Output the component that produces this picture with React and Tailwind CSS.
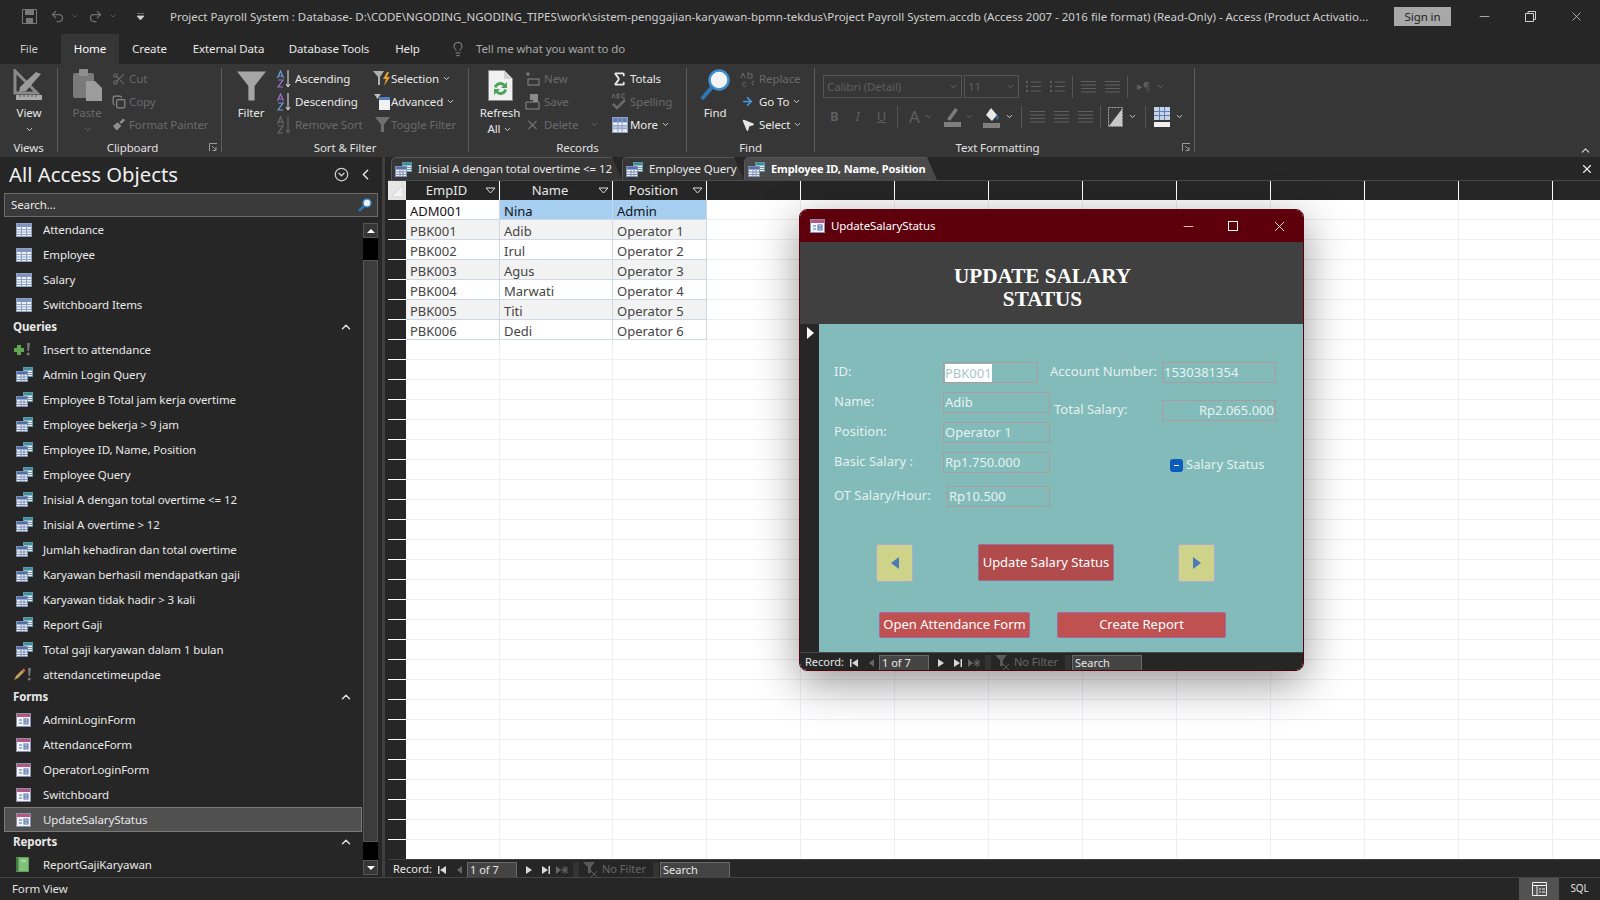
import React from 'react';
import { Scissors, Copy, Sigma, ChevronDown, ChevronUp, ChevronLeft, Lightbulb, Undo2, Redo2, Minus, X, ArrowRight, MousePointer2, CircleChevronDown } from 'lucide-react';

const SANS = "font-['Noto_Sans','Open_Sans',sans-serif]";

// ---------- small drawings ----------
const TableIcon = () => (
  <svg width="16" height="14" viewBox="0 0 16 14">
    <rect x="0.5" y="0.5" width="15" height="13" fill="#eef2f8" stroke="#8ea2c6" />
    <rect x="1" y="1" width="14" height="3" fill="#7f95c0" />
    <path d="M1 6.5h14M1 9h14M1 11.5h14M5.5 4v9M10.5 4v9" stroke="#8ea2c6" />
  </svg>
);

const QueryIcon = () => (
  <svg width="17" height="15" viewBox="0 0 17 15">
    <rect x="7.5" y="0.5" width="9" height="9" fill="#e8f0f2" stroke="#5f9aa8" />
    <rect x="8" y="1" width="8" height="2.5" fill="#3f8c9c" />
    <rect x="0.5" y="4.5" width="11" height="10" fill="#eef2f8" stroke="#7f8fb5" />
    <rect x="1" y="5" width="10" height="2.5" fill="#4f6fa8" />
    <path d="M1 10h10M1 12.5h10M5 7.5v7M8 7.5v7M12 5.5h4M12 7.5h4" stroke="#7f8fb5" />
  </svg>
);

const FormIcon = () => (
  <svg width="15" height="14" viewBox="0 0 15 14">
    <rect x="0.5" y="0.5" width="14" height="13" fill="#f3f5fa" stroke="#8a8fb0" />
    <rect x="1" y="1" width="13" height="3" fill="#b5567e" />
    <path d="M3 7h3M3 10h3" stroke="#4f6fa8" />
    <rect x="8" y="6" width="4" height="2" fill="none" stroke="#4f6fa8" />
    <rect x="8" y="9" width="4" height="2" fill="none" stroke="#4f6fa8" />
  </svg>
);

const ReportIcon = () => (
  <svg width="13" height="15" viewBox="0 0 13 15">
    <rect x="0" y="0" width="13" height="15" rx="1" fill="#5f9f5c" />
    <rect x="3" y="1" width="9" height="13" fill="#7fc07a" />
    <path d="M5 4h5" stroke="#d8f0d6" />
    <path d="M0 1h2v13H0z" fill="#3f7a40" />
  </svg>
);

const InsertQueryIcon = () => (
  <svg className="-ml-[3px]" width="20" height="15" viewBox="0 0 20 15">
    <path d="M4 3h4v3h3v4H8v3H4v-3H1V6h3z" fill="#5fa552" />
    <path d="M14 1h3l-1 8h-1.5z" fill="#777" />
    <circle cx="15.2" cy="12" r="1.5" fill="#777" />
  </svg>
);

const UpdateQueryIcon = () => (
  <svg className="-ml-[3px]" width="20" height="15" viewBox="0 0 20 15">
    <path d="M1 13l2-4 6-6 2 2-6 6z" fill="#c9a05a" />
    <path d="M9 3l1.5-1.5 2 2L11 5z" fill="#d06a5a" />
    <path d="M15 1h3l-1 8h-1.5z" fill="#777" />
    <circle cx="16.2" cy="12" r="1.5" fill="#777" />
  </svg>
);

const FunnelIcon = ({ w = 14, h = 14, fill = '#a5a5a5' }) => (
  <svg width={w} height={h} viewBox="0 0 28 28">
    <path d="M0 0h28L17 14v14h-6V14z" fill={fill} />
  </svg>
);

const TriDown = ({ color = '#e0e0e0' }) => (
  <svg width="11" height="7" viewBox="0 0 11 7">
    <path d="M1 1h9L5.5 6z" fill="none" stroke={color} />
  </svg>
);

const Launcher = () => (
  <svg width="9" height="9" viewBox="0 0 9 9" className="text-[#9a9a9a]">
    <path d="M0.5 8V0.5H8M3 3l4 4M7 4v3.5H3.5" fill="none" stroke="currentColor" />
  </svg>
);

// A/Z stacked, drawn with the arrow beside them
const SortIcon = ({ top, bottom, stroke }) => (
  <svg width="15" height="18" viewBox="0 0 15 18">
    <path d="M0.5 8L3.5 1l3 7M1.500 6h4" fill="none" stroke={top} strokeWidth="1.2" />
    <path d="M1 10h5l-5 7h5" fill="none" stroke={bottom} strokeWidth="1.2" />
    <path d="M11 0v16M9 14l2 3 2-3" fill="none" stroke={stroke} />
  </svg>
);

const GridIcon = ({ size = 15 }) => (
  <svg width={size} height={size} viewBox="0 0 15 15">
    <rect x="0.5" y="0.5" width="14" height="14" fill="#eef2f8" stroke="#8ea2c6" />
    <rect x="1" y="1" width="13" height="4" fill="#5f7fb5" />
    <rect x="1" y="8" width="13" height="3" fill="#b8c6de" />
    <path d="M1 8h13M1 11h13M5.5 1v13M9.5 1v13" stroke="#8ea2c6" />
  </svg>
);

const Lines = ({ dots }) => (
  <svg width="15" height="13" viewBox="0 0 15 13" className="shrink-0">
    {dots && <path d="M0 2h2M0 6.5h2M0 11h2" stroke="#5f5f5f" strokeWidth="2" />}
    <path d={dots ? 'M5 2h10M5 6.5h10M5 11h10' : 'M0 1.5h15M0 5h15M0 8.5h15M0 12h15'} stroke="#5f5f5f" />
  </svg>
);

// ---------- ribbon ----------
const Chev = ({ dim }) => <ChevronDown size={9} strokeWidth={2.5} className={`shrink-0 ${dim ? 'text-[#6a6a6a]' : 'text-[#d8d8d8]'}`} />;

function Small({ icon, label, dim, chev, iconW = 'w-[17px]', gap = 'ml-[3px]' }) {
  return (
    <div className={`flex h-[23px] items-center whitespace-nowrap ${dim ? 'text-[#6a6a6a]' : 'text-[#e8e8e8]'}`}>
      <span className={`flex items-center justify-center shrink-0 ${iconW}`}>{icon}</span>
      <span className={gap}>{label}</span>
      {chev && <span className="ml-[3px]"><Chev dim={dim} /></span>}
    </div>
  );
}

function Big({ icon, label, second, chev, dim, w }) {
  return (
    <div className={`flex flex-col items-center shrink-0 ${w} ${dim ? 'text-[#6a6a6a]' : 'text-[#e8e8e8]'}`}>
      <div className="h-[33px] flex items-end justify-center">{icon}</div>
      <div className="mt-[4px] leading-[16px]">{label}</div>
      <div className="h-[16px] flex items-center gap-[3px] leading-[16px]">
        {second && <span>{second}</span>}
        {chev && <Chev dim={dim} />}
      </div>
    </div>
  );
}

function Group({ title, w, launcher, children }) {
  return (
    <div className={`relative flex flex-col shrink-0 border-r border-[#5c5c5c] mt-[4px] mb-[5px] ${w}`}>
      <div className="flex flex-1 min-h-0">{children}</div>
      <div className={`h-[8px] flex items-center justify-center text-[#e0e0e0] ${launcher ? 'pr-[14px]' : ''}`}>{title}</div>
      {launcher && <div className="absolute right-[3px] bottom-[0px]"><Launcher /></div>}
    </div>
  );
}

function Ribbon() {
  return (
    <div className="flex h-[93px] bg-[#363636]">
      <Group title="Views" w="w-[58px]">
        <Big w="w-[58px]" label="View" chev icon={
          <svg width="32" height="32" viewBox="0 0 32 32">
            <path d="M2 2v22h22z" fill="none" stroke="#8a8a8a" strokeWidth="3" />
            <path d="M7 18l16-15 5 2-15 17-7 1z" fill="#9a9a9a" />
            <rect x="3" y="26" width="26" height="5" fill="#a8a8a8" />
            <path d="M7 26v2M11 26v2M15 26v2M19 26v2M23 26v2" stroke="#555" />
          </svg>
        } />
      </Group>

      <Group title="Clipboard" w="w-[164px]" launcher>
        <Big dim w="w-[58px]" label="Paste" chev icon={
          <svg width="29" height="32" viewBox="0 0 29 32">
            <rect x="0" y="4" width="21" height="25" rx="2" fill="#7a7a7a" />
            <rect x="6" y="0" width="9" height="7" rx="1" fill="#8f8f8f" />
            <path d="M13 12h9l7 7v13H13z" fill="#9c9c9c" />
          </svg>
        } />
        <div className="-ml-[4px] -mt-[1px]">
          <Small dim icon={<Scissors size={14} />} label="Cut" iconW="w-[14px]" />
          <Small dim icon={<Copy size={14} className="text-[#8a8a8a]" />} label="Copy" iconW="w-[14px]" />
          <Small dim icon={<svg width="15" height="15" viewBox="0 0 15 15"><path d="M1 9l5-4 4 4-5 5z" fill="#8f8f8f" /><path d="M8 5l4-4 2 2-4 4z" fill="#8f8f8f" /></svg>} label="Format Painter" iconW="w-[14px]" />
        </div>
      </Group>

      <Group title="Sort & Filter" w="w-[247px]">
        <Big w="w-[58px]" label="Filter" icon={<FunnelIcon w={29} h={30} />} />
        <div className="-ml-[3px] -mt-[1px] w-[96px] shrink-0">
          <Small icon={<SortIcon top="#6f9fe0" bottom="#a070d0" stroke="#e8e8e8" />} label="Ascending" iconW="w-[15px]" />
          <Small icon={<SortIcon top="#a070d0" bottom="#6f9fe0" stroke="#e8e8e8" />} label="Descending" iconW="w-[15px]" />
          <Small dim icon={<SortIcon top="#6a6a6a" bottom="#6a6a6a" stroke="#6a6a6a" />} label="Remove Sort" iconW="w-[15px]" />
        </div>
        <div className="-mt-[1px]">
          <Small chev iconW="w-[18px]" gap="ml-0" label="Selection" icon={
            <svg width="18" height="16" viewBox="0 0 18 16"><path d="M0 0h11L7 6v8H5V6z" fill="#b0b0b0" /><path d="M14 1l-4 7h3l-2 7 6-9h-3l2-5z" fill="#e0a030" /></svg>
          } />
          <Small chev iconW="w-[18px]" gap="ml-0" label="Advanced" icon={
            <svg width="18" height="16" viewBox="0 0 18 16"><path d="M1 0h7L5 4v1H4V4z" fill="#c0c0c0" /><rect x="6" y="3" width="11" height="13" fill="#f0f0f0" /><rect x="6" y="3" width="11" height="3" fill="#4f7fc0" /></svg>
          } />
          <Small dim iconW="w-[18px]" gap="ml-0" label="Toggle Filter" icon={<FunnelIcon w={15} h={15} fill="#6e6e6e" />} />
        </div>
      </Group>

      <Group title="Records" w="w-[218px]">
        <Big w="w-[62px]" label="Refresh" second="All" chev icon={
          <svg width="25" height="31" viewBox="0 0 25 31">
            <path d="M0.5 0.5h16l8 8v22h-24z" fill="#f0f0f0" stroke="#8a8a8a" />
            <path d="M16 1v8h8" fill="#d0d0d0" />
            <path d="M6 17a6.5 6.5 0 0 1 11-3l2-2v6h-6l2-2a4 4 0 0 0-6.5 2zM19 20a6.5 6.5 0 0 1-11 3l-2 2v-6h6l-2 2a4 4 0 0 0 6.5-2z" fill="#4ba35c" />
          </svg>
        } />
        <div className="-ml-[6px] -mt-[1px] w-[86px] shrink-0">
          <Small dim icon={<svg width="15" height="15" viewBox="0 0 15 15"><path d="M3 1v4M1 3h4" stroke="#8a8a8a" /><rect x="3" y="8" width="11" height="6" fill="none" stroke="#8a8a8a" /></svg>} label="New" iconW="w-[15px]" gap="ml-[4px]" />
          <Small dim icon={<svg width="15" height="17" viewBox="0 0 15 17"><path d="M1 9h13v7H1z" fill="none" stroke="#8a8a8a" /><path d="M5 1h8v8H8v-2H5z" fill="#8a8a8a" /></svg>} label="Save" iconW="w-[15px]" gap="ml-[4px]" />
          <div className="flex items-center">
            <Small dim icon={<X size={18} className="text-[#6e6e6e]" />} label="Delete" iconW="w-[15px]" gap="ml-[4px]" />
            <span className="ml-[12px]"><Chev dim /></span>
          </div>
        </div>
        <div className="-mt-[1px]">
          <Small icon={<Sigma size={18} strokeWidth={2.5} className="text-[#e8e8e8]" />} label="Totals" iconW="w-[17px]" gap="ml-[2px]" />
          <Small dim icon={<svg width="17" height="17" viewBox="0 0 17 17"><path d="M2 11l4 4 8-8" fill="none" stroke="#6a6a6a" strokeWidth="2.5" /><path d="M1 5l1.500-4 1.500 4M6 1v4h2V1zM14 1h-3v4h3" fill="none" stroke="#6a6a6a" /></svg>} label="Spelling" iconW="w-[17px]" gap="ml-[2px]" />
          <Small chev icon={<GridIcon size={16} />} label="More" iconW="w-[17px]" gap="ml-[2px]" />
        </div>
      </Group>

      <Group title="Find" w="w-[128px]">
        <Big w="w-[56px]" label="Find" icon={
          <svg width="30" height="32" viewBox="0 0 30 32">
            <circle cx="19" cy="11" r="9.5" fill="#f4f4f4" stroke="#3f8fd0" strokeWidth="2.5" />
            <path d="M12 18L2 30" stroke="#2f75b5" strokeWidth="4" />
          </svg>
        } />
        <div className="-ml-[4px] -mt-[1px]">
          <Small dim icon={<svg width="15" height="16" viewBox="0 0 15 16"><path d="M1 7l2-5 2 5M8 1v6h4V3H8M6 12a2 2 0 1 0 0 3M14 10a2 2 0 1 0 0 4" fill="none" stroke="#6a6a6a" /></svg>} label="Replace" iconW="w-[17px]" />
          <Small chev icon={<ArrowRight size={13} strokeWidth={3} className="text-[#4a9be0]" />} label="Go To" iconW="w-[17px]" />
          <Small chev icon={<MousePointer2 size={14} fill="#e8e8e8" className="text-[#e8e8e8]" />} label="Select" iconW="w-[17px]" />
        </div>
      </Group>

      <Group title="Text Formatting" w="w-[380px]" launcher>
        <div className="pl-[8px] pt-[7px] text-[#5f5f5f]">
          <div className="flex h-[23px] items-center gap-[2px]">
            <div className="flex w-[139px] h-[23px] items-center justify-between border border-[#555] px-[3px]">Calibri (Detail)<Chev dim /></div>
            <div className="flex w-[55px] h-[23px] items-center justify-between border border-[#555] px-[3px]">11<Chev dim /></div>
            <div className="flex items-center gap-[9px] ml-[5px] pr-[7px] border-r border-[#555] h-[22px]"><Lines dots /><Lines dots /></div>
            <div className="flex items-center gap-[9px] ml-[6px] pr-[7px] border-r border-[#555] h-[22px]"><Lines /><Lines /></div>
            <div className="flex items-center gap-[6px] ml-[7px]"><span className="text-[11px]">▸¶</span><Chev dim /></div>
          </div>
          <div className="flex h-[23px] mt-[7px] items-center">
            <div className="flex w-[75px] items-center gap-[17px] pl-[7px] font-bold text-[13px] border-r border-[#555] h-[22px]"><span>B</span><span className="italic font-normal">I</span><span className="underline font-normal">U</span></div>
            <div className="flex items-center gap-[4px] ml-[11px] text-[17px]">A<Chev dim /></div>
            <div className="ml-[11px] flex items-center gap-[4px]">
              <svg width="17" height="20" viewBox="0 0 17 20"><path d="M3 12l8-11 3 2-8 11z" fill="#7a7a7a" /><rect y="15" width="17" height="5" fill="#7f7f7f" /></svg>
              <Chev dim />
            </div>
            <div className="ml-[9px] flex items-center gap-[5px]">
              <svg width="17" height="22" viewBox="0 0 17 22"><path d="M8 2l6 7-5 6-6-6z" fill="#e8e8e8" /><path d="M14 8c2 3 2 5 0 6-1-1-1-3 0-6z" fill="#2f75b5" /><rect y="17" width="17" height="5" fill="#7f7f7f" /></svg>
              <Chev />
            </div>
            <div className="flex items-center gap-[9px] ml-[7px] pr-[7px] border-x border-[#555] pl-[8px] h-[22px]"><Lines /><Lines /><Lines /></div>
            <div className="flex items-center gap-[5px] ml-[7px] pr-[8px] border-r border-[#555] h-[22px]">
              <svg width="15" height="20" viewBox="0 0 15 20"><rect x="0.5" y="0.5" width="14" height="19" fill="#3a3a3a" stroke="#a8a8a8" strokeDasharray="2 1" /><path d="M1 19L14 2v17z" fill="#c8c8c8" /></svg>
              <Chev />
            </div>
            <div className="flex items-center gap-[5px] ml-[8px]">
              <svg width="16" height="20" viewBox="0 0 16 20"><rect width="16" height="13" fill="#c8d3e6" /><path d="M0 4.5h16M0 8.5h16M5.5 0v13M10.5 0v13" stroke="#5f7fb5" /><rect y="15" width="16" height="5" fill="#f0f0f0" /></svg>
              <Chev />
            </div>
          </div>
        </div>
      </Group>

      <div className="flex-1 relative">
        <ChevronUp size={13} className="absolute right-[8px] bottom-[0px] text-[#d8d8d8]" />
      </div>
    </div>
  );
}

// ---------- navigation pane ----------
const NAV = [
  { name: 'Tables', hidden: true, items: [['Attendance', TableIcon], ['Employee', TableIcon], ['Salary', TableIcon], ['Switchboard Items', TableIcon]] },
  { name: 'Queries', items: [
    ['Insert to attendance', InsertQueryIcon], ['Admin Login Query', QueryIcon], ['Employee B Total jam kerja overtime', QueryIcon],
    ['Employee bekerja > 9 jam', QueryIcon], ['Employee ID, Name, Position', QueryIcon], ['Employee Query', QueryIcon],
    ['Inisial A dengan total overtime <= 12', QueryIcon], ['Inisial A overtime > 12', QueryIcon], ['Jumlah kehadiran dan total overtime', QueryIcon],
    ['Karyawan berhasil mendapatkan gaji', QueryIcon], ['Karyawan tidak hadir > 3 kali', QueryIcon], ['Report Gaji', QueryIcon],
    ['Total gaji karyawan dalam 1 bulan', QueryIcon], ['attendancetimeupdae', UpdateQueryIcon],
  ] },
  { name: 'Forms', items: [['AdminLoginForm', FormIcon], ['AttendanceForm', FormIcon], ['OperatorLoginForm', FormIcon], ['Switchboard', FormIcon], ['UpdateSalaryStatus', FormIcon]] },
  { name: 'Reports', items: [['ReportGajiKaryawan', ReportIcon]] },
];

function NavPane() {
  return (
    <div className="flex flex-col w-[379px] shrink-0 bg-[#262626] text-[#e8e8e8]">
      <div className="flex h-[36px] items-center pb-[2px] pl-[9px] pr-[5px]">
        <span className="text-[20.3px] tracking-normal flex-1 leading-[28px] text-[#f0f0f0]">All Access Objects</span>
        <CircleChevronDown size={15} className="text-[#d0d0d0] mr-[8px]" />
        <ChevronLeft size={17} className="text-[#e8e8e8]" />
      </div>
      <div className="flex h-[24px] mx-[4px] mr-[1px] items-center justify-between border border-[#6a6a6a] bg-[#3a3a3a] pl-[6px] pr-[5px]">
        <span>Search...</span>
        <svg width="14" height="14" viewBox="0 0 14 14">
          <circle cx="9" cy="5" r="4" fill="#f0f0f0" stroke="#2f85d0" strokeWidth="1.5" />
          <path d="M6 8l-5 5" stroke="#2f75b5" strokeWidth="2.5" />
        </svg>
      </div>
      <div className="flex flex-1 min-h-0 pr-[1px]">
        <div className="flex-1 min-w-0 overflow-hidden pl-[4px]">
          {NAV.map(g => (
            <div key={g.name}>
              {!g.hidden && (
                <div className="flex h-[20px] items-center justify-between pl-[9px] pr-[9px] font-bold">
                  {g.name}
                  <ChevronUp size={14} strokeWidth={2.5} className="text-[#e0e0e0]" />
                </div>
              )}
              {g.items.map(([label, Icon]) => (
                <div key={label} className={`flex h-[25px] items-center border ${label === 'UpdateSalaryStatus' ? 'bg-[#505050] border-[#7a7a7a]' : 'border-transparent'}`}>
                  <span className="flex w-[38px] pl-[11px] shrink-0 items-center"><Icon /></span>
                  <span className="whitespace-nowrap">{label}</span>
                </div>
              ))}
            </div>
          ))}
        </div>
        <div className="flex flex-col w-[15px] mt-[6px] mb-[2px] ml-[1px] shrink-0">
          <div className="flex h-[15px] items-center justify-center bg-[#363636] border border-[#555]"><span className="block w-0 h-0 border-x-[4px] border-x-transparent border-b-[4px] border-b-white" /></div>
          <div className="h-[22px] bg-black" />
          <div className="flex-1 bg-[#3c3c3c] border border-[#555]" />
          <div className="h-[18px] bg-black" />
          <div className="flex h-[15px] items-center justify-center bg-[#363636] border border-[#555]"><span className="block w-0 h-0 border-x-[4px] border-x-transparent border-t-[4px] border-t-white" /></div>
        </div>
      </div>
    </div>
  );
}

// ---------- datasheet ----------
const ROWS = [
  ['ADM001', 'Nina', 'Admin'], ['PBK001', 'Adib', 'Operator 1'], ['PBK002', 'Irul', 'Operator 2'], ['PBK003', 'Agus', 'Operator 3'],
  ['PBK004', 'Marwati', 'Operator 4'], ['PBK005', 'Titi', 'Operator 5'], ['PBK006', 'Dedi', 'Operator 6'],
];
const EMPTY_COLS = Array.from({ length: 10 });
const EMPTY_ROWS = Array.from({ length: 26 });

function Tab({ label, w, active }) {
  return (
    <div className={`flex h-[23px] items-center shrink-0 pl-[3px] rounded-tl-[5px] border-t border-l border-[#555] [clip-path:polygon(0_0,calc(100%-10px)_0,100%_100%,0_100%)] ${active ? 'bg-[#4a4a4a] font-bold text-[11px] text-white' : 'bg-[#363636] text-[#e8e8e8]'} ${w}`}>
      <QueryIcon />
      <span className="ml-[6px] whitespace-nowrap">{label}</span>
    </div>
  );
}

function RecordBar() {
  return (
    <div className="flex items-center h-[17px] pt-[2px] text-[11px] tracking-normal bg-[#262626] text-[#e8e8e8] whitespace-nowrap">
      <span className="ml-[5px] w-[45px]">Record:</span>
      <svg width="8" height="8" viewBox="0 0 8 8"><path d="M0 0h1.5v8H0zM8 0v8L2 4z" fill="#d8d8d8" /></svg>
      <svg className="ml-[11px]" width="6" height="8" viewBox="0 0 6 8"><path d="M5 0v8L0 4z" fill="#666" /></svg>
      <div className="ml-[4px] flex items-center w-[50px] h-[15px] bg-[#444] border-t border-x border-[#6a6a6a] pl-[2px]">1 of 7</div>
      <svg className="ml-[9px]" width="6" height="8" viewBox="0 0 6 8"><path d="M0 0v8l6-4z" fill="#d8d8d8" /></svg>
      <svg className="ml-[10px]" width="8" height="8" viewBox="0 0 8 8"><path d="M0 0v8l6-4zM6.500 0H8v8H6.500z" fill="#d8d8d8" /></svg>
      <svg className="ml-[6px]" width="12" height="8" viewBox="0 0 12 8"><path d="M0 0v8l5-4z" fill="#666" /><path d="M9 0v8M5 4h7M6 1l6 6M12 1l-6 6" stroke="#666" /></svg>
      <div className="ml-[5px] h-[15px] w-[6px] bg-[#333]" />
      <svg className="ml-[4px]" width="16" height="15" viewBox="0 0 16 15"><path d="M0 0h12L8 5v6H5V5z" fill="#5a5a5a" /><path d="M8 9l6 6M14 9l-6 6" stroke="#5a5a5a" /></svg>
      <span className="ml-[3px] w-[47px] text-[#666]">No Filter</span>
      <div className="ml-[4px] h-[15px] w-[6px] bg-[#333]" />
      <div className="ml-[1px] flex items-center w-[70px] h-[15px] bg-[#444] border-t border-x border-[#6a6a6a] pl-[2px]">Search</div>
    </div>
  );
}

const colW = j => (j === 1 ? 'w-[113px]' : 'w-[94px]');

function Datasheet() {
  return (
    <div className="flex flex-col flex-1 min-w-0 bg-[#262626]">
      <div className="flex h-[24px] shrink-0 items-end pl-[3px] border-b border-[#4a4a4a]">
        <Tab label="Inisial A dengan total overtime <= 12" w="w-[231px]" />
        <Tab label="Employee Query" w="w-[122px]" />
        <Tab label="Employee ID, Name, Position" w="w-[193px]" active />
        <div className="flex-1" />
        <X size={14} className="text-[#e8e8e8] mr-[6px] mb-[4px]" />
      </div>
      <div className="flex flex-1 min-h-0 text-[13px] tracking-normal overflow-hidden">
        <div className="flex flex-col w-[18px] shrink-0">
          <svg className="shrink-0" width="18" height="19" viewBox="0 0 18 19">
            <rect width="18" height="19" fill="#e6e6e6" />
            <path d="M3 16L15 4v12z" fill="#f2f2f2" stroke="#d4d4d4" />
          </svg>
          {[...ROWS, ...EMPTY_ROWS].map((_, i) => <div key={i} className="h-[20px] shrink-0 bg-[#262626] border-b border-white" />)}
        </div>
        <div className="flex-1 min-w-0 bg-white overflow-hidden">
          <div className="flex h-[19px] bg-[#262626] text-[#e8e8e8]">
            {['EmpID', 'Name', 'Position'].map((h, j) => (
              <div key={h} className={`relative flex items-center justify-center shrink-0 pr-[12px] border-r border-white ${colW(j)}`}>
                {h}
                <span className="absolute right-[3px] top-[6px]"><TriDown /></span>
              </div>
            ))}
            {EMPTY_COLS.map((_, i) => <div key={i} className="w-[94px] shrink-0 border-r border-white" />)}
          </div>
          {ROWS.map((r, i) => (
            <div key={r[0]} className={`flex h-[20px] ${i === 0 ? 'text-[#111]' : 'text-[#444]'} ${i % 2 === 1 ? 'bg-[#f2f2f2]' : 'bg-white'}`}>
              {r.map((c, j) => (
                <div key={j} className={`h-[20px] shrink-0 pl-[4px] pt-[3px] leading-[17px] border-r border-b border-[#d0d7e5] ${colW(j)} ${i === 0 && j > 0 ? 'bg-[#a6cef0]' : ''}`}>{c}</div>
              ))}
              {EMPTY_COLS.map((_, k) => <div key={k} className="w-[94px] shrink-0 h-[20px] bg-white border-r border-b border-[#eeeff4]" />)}
            </div>
          ))}
          {EMPTY_ROWS.map((_, i) => (
            <div key={i} className="flex h-[20px]">
              {[0, 1, 2].map(j => <div key={j} className={`shrink-0 border-r border-b border-[#eeeff4] ${colW(j)}`} />)}
              {EMPTY_COLS.map((_, k) => <div key={k} className="w-[94px] shrink-0 border-r border-b border-[#eeeff4]" />)}
            </div>
          ))}
        </div>
      </div>
      <div className="border-t border-[#3f3f3f]"><RecordBar /></div>
    </div>
  );
}

// ---------- floating form ----------
const Label = ({ children, w }) => <span className={`shrink-0 whitespace-nowrap -translate-y-[1px] ${w}`}>{children}</span>;
const Field = ({ w, right, children }) => (
  <div className={`flex items-center h-[21px] border border-[#a89c9c] text-[#e6f3f1] px-[1px] ${w} ${right ? 'justify-end' : ''}`}>{children}</div>
);

function FormWindow() {
  return (
    <div className="absolute left-[799px] top-[209px] flex flex-col w-[505px] h-[462px] rounded-[8px] overflow-hidden border border-[#5e000c] shadow-[0_12px_44px_rgba(0,0,0,0.42)] text-[13px] tracking-normal">
      <div className="flex h-[32px] shrink-0 items-center bg-[#5e000c] text-[11.5px] tracking-[-0.1px] text-white">
        <span className="ml-[10px]"><FormIcon /></span>
        <span className="ml-[6px] flex-1">UpdateSalaryStatus</span>
        <Minus size={15} strokeWidth={1.2} className="mr-[32px]" />
        <div className="w-[10px] h-[10px] border border-white mr-[33px]" />
        <X size={17} strokeWidth={1.2} className="mr-[15px]" />
      </div>
      <div className="flex h-[82px] shrink-0 items-center justify-center bg-[#404040] pr-[18px] pt-[10px] text-center font-['Liberation_Serif',serif] font-bold text-[21.2px] leading-[23.5px] text-white">
        UPDATE SALARY<br />STATUS
      </div>
      <div className="flex flex-1 min-h-0">
        <div className="w-[19px] shrink-0 bg-[#262626] pt-[3px] pl-[7px]">
          <span className="block w-0 h-0 border-y-[6px] border-y-transparent border-l-[7px] border-l-white" />
        </div>
        <div className="flex-1 bg-[#82bbb9] text-[#e4f1ef] pl-[15px] pt-[38px]">
          <div className="flex h-[145px]">
            <div className="w-[216px] shrink-0 flex flex-col">
              <div className="flex items-center h-[21px]">
                <Label w="w-[109px]">ID:</Label>
                <Field w="w-[95px]"><span className="bg-white text-[#a8c8c8] leading-[18px]">PBK001</span></Field>
              </div>
              <div className="flex items-center h-[21px] mt-[9px]"><Label w="w-[109px]">Name:</Label><Field w="w-[107px]">Adib</Field></div>
              <div className="flex items-center h-[21px] mt-[9px]"><Label w="w-[109px]">Position:</Label><Field w="w-[107px]">Operator 1</Field></div>
              <div className="flex items-center h-[21px] mt-[9px]"><Label w="w-[109px]">Basic Salary :</Label><Field w="w-[107px]">Rp1.750.000</Field></div>
              <div className="flex items-center h-[21px] mt-[13px]"><Label w="w-[113px]">OT Salary/Hour:</Label><Field w="w-[103px]">Rp10.500</Field></div>
            </div>
            <div className="flex flex-col">
              <div className="flex items-center h-[21px]"><Label w="w-[112px]">Account Number:</Label><Field w="w-[114px]">1530381354</Field></div>
              <div className="flex items-center h-[21px] mt-[17px] pl-[4px]"><Label w="w-[108px]">Total Salary:</Label><Field w="w-[114px]" right>Rp2.065.000</Field></div>
              <div className="flex items-center h-[16px] mt-[36px] pl-[120px] whitespace-nowrap">
                <span className="flex items-center justify-center w-[13px] h-[13px] rounded-[3px] bg-[#0a5dba] mr-[3px]"><span className="block w-[5px] h-[1px] bg-white" /></span>
                Salary Status
              </div>
            </div>
          </div>
          <div className="flex mt-[37px] pl-[42px] items-start">
            <div className="flex items-center justify-center w-[37px] h-[38px] rounded-[2px] bg-[#cfd38a] border border-[#a9add8]"><span className="block w-0 h-0 border-y-[6px] border-y-transparent border-r-[8px] border-r-[#4a7db5]" /></div>
            <div className="flex items-center justify-center ml-[65px] w-[136px] h-[37px] rounded-[2px] bg-[#b14b4b] text-white border border-[#a06a9a]">Update Salary Status</div>
            <div className="flex items-center justify-center ml-[64px] w-[37px] h-[38px] rounded-[2px] bg-[#cfd38a] border border-[#a9add8]"><span className="block w-0 h-0 border-y-[6px] border-y-transparent border-l-[8px] border-l-[#4a7db5]" /></div>
          </div>
          <div className="flex mt-[30px] pl-[45px]">
            <div className="flex items-center justify-center w-[151px] h-[26px] rounded-[2px] bg-[#bf5151] text-white border border-[#a36aa5]">Open Attendance Form</div>
            <div className="flex items-center justify-center ml-[27px] w-[169px] h-[26px] rounded-[2px] bg-[#bf5151] text-white border border-[#a36aa5]">Create Report</div>
          </div>
        </div>
      </div>
      <div className="shrink-0 border-t border-[#4a4a4a]"><RecordBar /></div>
    </div>
  );
}

// ---------- app ----------
export default function App() {
  return (
    <div className={`relative flex flex-col w-[1600px] h-[900px] overflow-hidden bg-[#262626] text-[11.5px] tracking-[-0.1px] ${SANS}`}>
      <div className="flex h-[32px] items-center text-[#cfcfcf] whitespace-nowrap">
        <svg className="ml-[22px]" width="15" height="15" viewBox="0 0 15 15">
          <path d="M0.5 0.5h14v14h-14z" fill="none" stroke="#7a7a7a" />
          <rect x="3" y="1" width="9" height="5" fill="#7a7a7a" />
          <rect x="4" y="9" width="7" height="6" fill="#7a7a7a" />
        </svg>
        <Undo2 size={15} className="ml-[13px] text-[#6e6e6e]" />
        <ChevronDown size={8} className="ml-[6px] text-[#6e6e6e]" />
        <Redo2 size={15} className="ml-[9px] text-[#6e6e6e]" />
        <ChevronDown size={8} className="ml-[6px] text-[#6e6e6e]" />
        <svg className="ml-[20px]" width="7" height="7" viewBox="0 0 7 7"><path d="M0 0h7M0 3h7L3.500 7z" stroke="#d0d0d0" fill="#d0d0d0" strokeWidth="0.8" /></svg>
        <span className="ml-[26px] flex-1 mt-[2px] overflow-hidden tracking-[-0.02px]">Project Payroll System : Database- D:\CODE\NGODING_NGODING_TIPES\work\sistem-penggajian-karyawan-bpmn-tekdus\Project Payroll System.accdb (Access 2007 - 2016 file format) (Read-Only)  -  Access (Product Activatio...</span>
        <div className="ml-[25px] flex items-center justify-center w-[57px] h-[19px] mt-[1px] bg-[#a8a8a8] text-[#222]">Sign in</div>
        <Minus size={15} strokeWidth={1.2} className="ml-[26px]" />
        <svg className="ml-[33px]" width="11" height="11" viewBox="0 0 11 11"><path d="M3 2V0.5h7.500v8H9M0.500 2.500h8v8h-8z" fill="none" stroke="#cfcfcf" /></svg>
        <X size={15} strokeWidth={1.2} className="ml-[33px] mr-[16px]" />
      </div>

      <div className="flex h-[32px] items-end text-[#e8e8e8]">
        <div className="flex w-[61px] h-[30px] items-center pl-[20px] text-[#c8c8c8]">File</div>
        <div className="flex w-[58px] h-[30px] items-center justify-center bg-[#363636] text-white">Home</div>
        <div className="flex w-[61px] h-[30px] items-center justify-center">Create</div>
        <div className="flex w-[97px] h-[30px] items-center justify-center">External Data</div>
        <div className="flex w-[104px] h-[30px] items-center justify-center">Database Tools</div>
        <div className="flex w-[53px] h-[30px] items-center justify-center">Help</div>
        <div className="flex h-[30px] items-center ml-[16px] text-[#a8a8a8]">
          <Lightbulb size={16} strokeWidth={1.2} />
          <span className="ml-[10px]">Tell me what you want to do</span>
        </div>
      </div>

      <Ribbon />

      <div className="flex flex-1 min-h-0">
        <NavPane />
        <div className="w-[9px] shrink-0 bg-[#262626] flex justify-center"><div className="w-[3px] bg-[#3f3f3f]" /></div>
        <Datasheet />
      </div>

      <div className="flex h-[23px] items-center shrink-0 bg-[#262626] border-t border-[#444] pl-[12px] pb-[1px] text-[#e0e0e0]">
        <span className="flex-1">Form View</span>
        <div className="flex w-[40px] h-[22px] -mb-[1px] items-center justify-center bg-[#525252]">
          <svg width="15" height="14" viewBox="0 0 15 14"><path d="M0.500 0.500h14v13h-14zM0.500 3.500h14M5 3.500v10M7 7h2M10 7h3M7 10h2M10 10h3" fill="none" stroke="#f0f0f0" /></svg>
        </div>
        <span className="w-[41px] text-center text-[10px]">SQL</span>
      </div>

      <FormWindow />
    </div>
  );
}
